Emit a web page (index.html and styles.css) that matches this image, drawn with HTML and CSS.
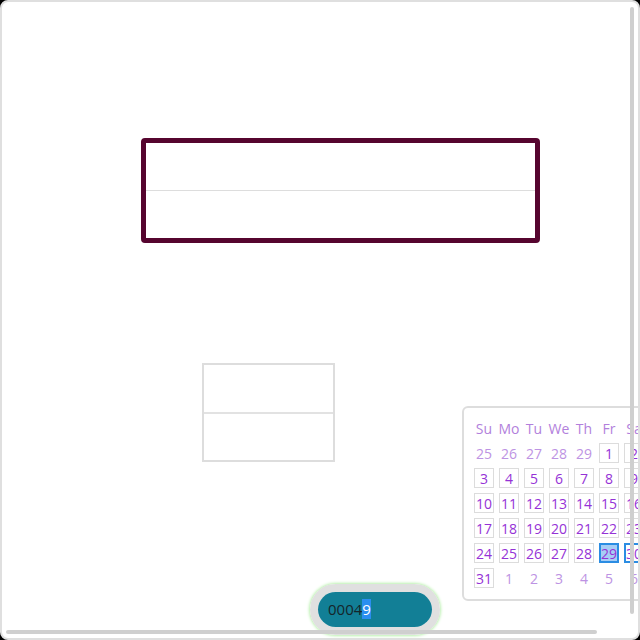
FILE: index.html
```html
<!DOCTYPE html>
<html>
<head>
<meta charset="utf-8">
<link rel="stylesheet" href="styles.css">
</head>
<body>
<div class="frame">
  <div class="content">
    <div class="table-wide">
      <div class="row"></div>
      <div class="row"></div>
    </div>
    <div class="table-small">
      <div class="row"></div>
      <div class="row"></div>
    </div>
    <div class="pill-ring">
      <div class="pill">0004<span class="sel">9</span></div>
    </div>
  </div>

  <div class="calendar">
    <div class="grid">
      <span class="hd">Su</span><span class="hd">Mo</span><span class="hd">Tu</span><span class="hd">We</span><span class="hd">Th</span><span class="hd">Fr</span><span class="hd">Sa</span>
      <span class="out">25</span><span class="out">26</span><span class="out">27</span><span class="out">28</span><span class="out">29</span><span class="day">1</span><span class="day">2</span>
      <span class="day">3</span><span class="day">4</span><span class="day">5</span><span class="day">6</span><span class="day">7</span><span class="day">8</span><span class="day">9</span>
      <span class="day">10</span><span class="day">11</span><span class="day">12</span><span class="day">13</span><span class="day">14</span><span class="day">15</span><span class="day">16</span>
      <span class="day">17</span><span class="day">18</span><span class="day">19</span><span class="day">20</span><span class="day">21</span><span class="day">22</span><span class="day">23</span>
      <span class="day">24</span><span class="day">25</span><span class="day">26</span><span class="day">27</span><span class="day">28</span><span class="day selected">29</span><span class="day focused">30</span>
      <span class="day">31</span><span class="out">1</span><span class="out">2</span><span class="out">3</span><span class="out">4</span><span class="out">5</span><span class="out">6</span>
    </div>
  </div>

  <div class="scroll-v"></div>
  <div class="scroll-h"></div>
</div>
</body>
</html>
```
FILE: styles.css
```css
html, body {
  margin: 0;
  padding: 0;
  background: #000;
}

.frame {
  width: 640px;
  height: 640px;
  box-sizing: border-box;
  border: 2px solid #dfdfdf;
  border-radius: 8px;
  background: #fff;
  overflow: hidden;
  position: relative;
  font-family: "Open Sans", "Noto Sans", sans-serif;
}

.content {
  display: flex;
  flex-direction: column;
  align-items: flex-start;
  padding-top: 136px;
}

.table-wide {
  margin-left: 139px;
  width: 399px;
  height: 105px;
  box-sizing: border-box;
  border: 5px solid #56052f;
  border-radius: 4px;
  display: flex;
  flex-direction: column;
}

.table-wide .row {
  flex: 1;
}

.table-wide .row + .row {
  border-top: 1px solid #dddddd;
}

.table-small {
  margin-left: 200px;
  margin-top: 120px;
  width: 133px;
  height: 99px;
  box-sizing: border-box;
  border: 2px solid #dddddd;
  display: flex;
  flex-direction: column;
}

.table-small .row {
  flex: 1;
}

.table-small .row + .row {
  border-top: 2px solid #e2e2e2;
}

.pill-ring {
  margin-left: 308px;
  margin-top: 122px;
  border: 8px solid #e0e0e0;
  border-radius: 30px;
  box-shadow: 0 0 3px 1px #b9f0ae;
}

.pill {
  width: 114px;
  height: 35px;
  box-sizing: border-box;
  padding-left: 10px;
  background: #127f96;
  border-radius: 18px;
  color: #15252a;
  font-size: 15px;
  line-height: 35px;
}

.sel {
  background: #2a8ef0;
  color: #fff;
}

.calendar {
  position: absolute;
  left: 460px;
  top: 404px;
  box-sizing: border-box;
  border: 2px solid #dddddd;
  border-radius: 6px;
  background: #fff;
  padding: 10px;
  width: 194px;
  height: 195px;
}

.grid {
  display: grid;
  grid-template-columns: repeat(7, 20px);
  grid-auto-rows: 20px;
  gap: 5px;
  font-size: 14px;
}

.grid span {
  display: flex;
  align-items: center;
  justify-content: center;
  box-sizing: border-box;
  white-space: nowrap;
}

.hd {
  color: #b27fdc;
}

.out {
  color: #bd93e3;
}

.day {
  color: #9532d6;
  border: 1px solid #dcdcdc;
}

.day.selected {
  background: #a6cdf5;
  border: 2px solid #2b8de3;
}

.day.focused {
  border: 2px solid #2b8de3;
}

.scroll-v {
  position: absolute;
  left: 628px;
  top: 5px;
  width: 4px;
  height: 607px;
  border-radius: 2px;
  background: #cfcfcf;
}

.scroll-h {
  position: absolute;
  left: 4px;
  top: 628px;
  width: 591px;
  height: 4px;
  border-radius: 2px;
  background: #cfcfcf;
}
```
